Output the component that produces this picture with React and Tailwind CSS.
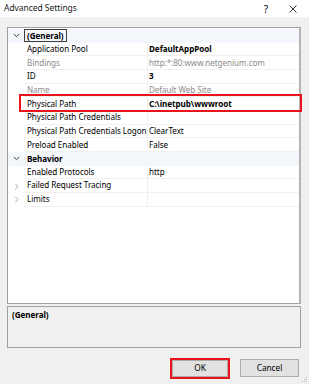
import React from 'react';

const font = { fontFamily: '"Noto Sans", "Open Sans", sans-serif' };

const Chevron = ({ open, gray }) => (
  <svg width="7" height="7" viewBox="0 0 7 7" className="block">
    {open ? (
      <path d="M0.8 2 L3.5 4.7 L6.2 2" fill="none" stroke={gray ? '#8a8a8a' : '#3c3c3c'} strokeWidth="1" />
    ) : (
      <path d="M2.3 0.8 L5 3.5 L2.3 6.2" fill="none" stroke="#a6a6a6" strokeWidth="1" />
    )}
  </svg>
);

const Category = ({ name, selected }) => (
  <div className="flex h-[13.67px] items-center bg-[#f3f6fb]">
    <div className="flex w-[15px] justify-center pl-[1px]">
      <Chevron open />
    </div>
    <div className="pl-[1px]">
      <span
        className={`font-bold leading-[10px] px-[2px] ${selected ? 'border border-[#404040]' : 'border border-transparent'}`}
      >
        {name}
      </span>
    </div>
  </div>
);

const Prop = ({ label, value, bold, gray, collapsed }) => (
  <div className="flex h-[13.67px] items-center">
    <div className="flex w-[15px] h-full items-center justify-center pl-[2px]">
      {collapsed && <Chevron />}
    </div>
    <div
      className={`w-[125px] h-full flex items-center pl-[4px] border-r border-b border-[#f0f0f0] whitespace-nowrap overflow-hidden ${gray ? 'text-[#8c8c8c]' : 'text-black'}`}
    >
      {label}
    </div>
    <div
      className={`flex-1 h-full flex items-center pl-[1px] border-b border-[#f0f0f0] whitespace-nowrap overflow-hidden ${gray ? 'text-[#8c8c8c]' : 'text-black'} ${bold ? 'font-bold' : ''}`}
    >
      {value}
    </div>
  </div>
);

export default function App() {
  return (
    <div className="relative w-[309px] h-[384px] bg-[#f0f0f0] text-[8.1px] tracking-[-0.05px] text-black overflow-hidden" style={font}>
      {/* title bar */}
      <div className="flex h-[17px] items-center bg-white">
        <div className="pl-[4px] text-[8.5px] text-[#1a1a1a]">Advanced Settings</div>
        <div className="ml-auto w-[20px] text-center text-[10px] leading-none">?</div>
        <div className="ml-[12px] mr-[11px] w-[10px] flex justify-center">
          <svg width="8" height="8" viewBox="0 0 8 8">
            <path d="M0.5 0.5 L7.5 7.5 M7.5 0.5 L0.5 7.5" stroke="#222" strokeWidth="0.9" />
          </svg>
        </div>
      </div>

      {/* property grid */}
      <div className="mt-[10px] ml-[7px] w-[294px] h-[277px] border border-[#a0a0a0] border-r-[2px] border-r-[#b4b4b4] bg-white pt-[1px]">
        <Category name="(General)" selected />
        <Prop label="Application Pool" value="DefaultAppPool" bold />
        <Prop label="Bindings" value="http:*:80:www.netgenium.com" gray />
        <Prop label="ID" value="3" bold />
        <Prop label="Name" value="Default Web Site" gray />
        <Prop label="Physical Path" value="C:\inetpub\wwwroot" bold />
        <Prop label="Physical Path Credentials" value="" />
        <Prop label="Physical Path Credentials Logon" value="ClearText" />
        <Prop label="Preload Enabled" value="False" />
        <Category name="Behavior" />
        <Prop label="Enabled Protocols" value="http" />
        <Prop label="Failed Request Tracing" value="" collapsed />
        <Prop label="Limits" value="" collapsed />
      </div>

      {/* description panel */}
      <div className="mt-[2px] ml-[7px] w-[294px] h-[42px] border border-[#a0a0a0] bg-[#f0f0f0] px-[4px] pt-[2px]">
        <div className="font-bold">(General)</div>
      </div>

      {/* buttons */}
      <div className="flex justify-end gap-[10px] mt-[10px] mr-[10px]">
        <div className="border-2 border-[#e8141c] p-0">
          <button className="w-[56px] h-[17px] bg-[#e1e1e1] border border-[#adadad] text-[8.3px] leading-none">OK</button>
        </div>
        <div className="pt-[1px]">
          <button className="w-[59px] h-[18px] bg-[#e1e1e1] border border-[#adadad] text-[8.3px] leading-none">Cancel</button>
        </div>
      </div>

      {/* red highlight around Physical Path */}
      <div className="absolute left-[19px] top-[94px] w-[283px] h-[18px] border-2 border-[#e8141c] pointer-events-none" />

      {/* resize grip */}
      <svg className="absolute right-[1px] bottom-[1px]" width="7" height="7" viewBox="0 0 7 7">
        <rect x="5" y="1" width="1" height="1" fill="#b8b8b8" />
        <rect x="3" y="3" width="1" height="1" fill="#b8b8b8" />
        <rect x="5" y="3" width="1" height="1" fill="#b8b8b8" />
        <rect x="1" y="5" width="1" height="1" fill="#b8b8b8" />
        <rect x="3" y="5" width="1" height="1" fill="#b8b8b8" />
        <rect x="5" y="5" width="1" height="1" fill="#b8b8b8" />
      </svg>
    </div>
  );
}
